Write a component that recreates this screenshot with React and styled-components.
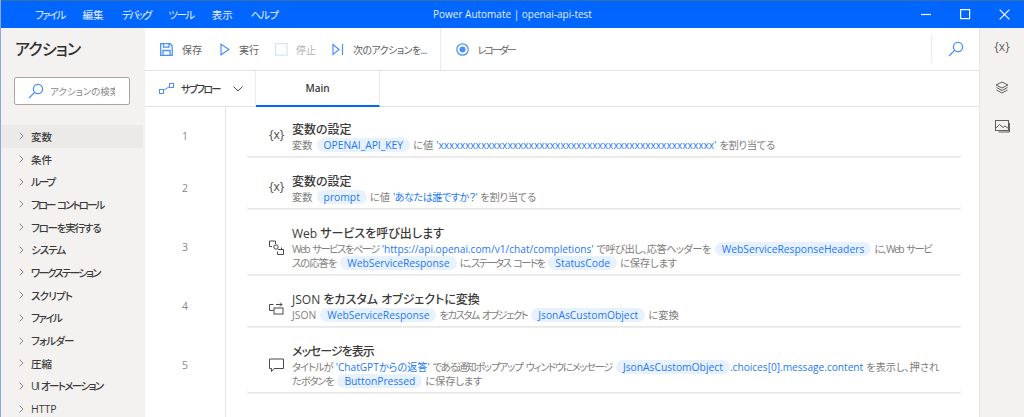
import React from "react";
import styled, { createGlobalStyle } from "styled-components";

const Global = createGlobalStyle`
  html, body { margin: 0; padding: 0; background: #fff; overflow: hidden; }
  body { font-family: "Open Sans", "Noto Sans CJK JP", sans-serif; font-feature-settings: "palt"; }
  #root { width: 1024px; height: 417px; }
`;
const Win = styled.div`
  width: 1024px; height: 417px; display: flex; flex-direction: column; overflow: hidden;
  border-left: 1px solid #8fa6d8; box-sizing: border-box; background: #fff;
`;
const TitleBar = styled.div`
  height: 28px; flex: none; background: #0066ff; border-top: 1px solid #3a6ea8; box-sizing: border-box;
  display: flex; align-items: center; color: #fff; position: relative; font-size: 10px;
`;
const Menu = styled.div`display: flex; padding-left: 34px; gap: 18px; font-size: 10.5px; color: #e8f1ff;`;
const TitleText = styled.div`position: absolute; left: 432px; top: 6px; font-size: 10px; line-height: 15px; color: #e4eeff;`;
const WinButtons = styled.div`position: absolute; right: 0; top: 0; display: flex;`;
const WinBtn = styled.div`width: 39px; height: 27px; display: flex; align-items: center; justify-content: center;`;
const Body = styled.div`flex: 1; display: flex; min-height: 0;`;
const Sidebar = styled.aside`width: 144px; flex: none; background: #f3f2f1; overflow: hidden;`;
const SideTitle = styled.div`font-size: 16px; font-weight: 500; color: #323130; padding: 10px 0 0 14px; line-height: 22px; letter-spacing: -0.8px;`;
const SearchBox = styled.div`
  margin: 17px 0 0 13px; width: 116px; height: 28px; box-sizing: border-box; background: #fff;
  border: 1px solid #a9a7a5; border-radius: 2px; display: flex; align-items: center; padding-left: 13px; gap: 6px;
  font-size: 9.5px; color: #8a8886; white-space: nowrap;
`;
const SearchHint = styled.span`width: 65px; overflow: hidden; flex: none;`;
const SideList = styled.div`margin-top: 20px;`;
const SideItem = styled.div`
  height: 22.7px; display: flex; align-items: center; font-size: 10.5px; font-weight: 500; color: #3b3a39;
  padding-left: 18px; gap: 7px; width: 142px; box-sizing: border-box; white-space: nowrap;
  background: ${p => (p.$active ? "#ebeae9" : "transparent")};
`;
const Squeezed = styled.span`letter-spacing: ${p => p.$ls || 0}px; word-spacing: 1.5px;`;
const Main = styled.main`flex: 1; display: flex; flex-direction: column; min-width: 0;`;
const Toolbar = styled.div`
  height: 43px; flex: none; box-sizing: border-box; border-bottom: 1px solid #e3e2e1; display: flex; align-items: center;
  padding-left: 15px; font-size: 10px; color: #605e5c;
`;
const ToolBtn = styled.div`
  display: flex; align-items: center; gap: ${p => p.$inner || 9}px; margin-right: ${p => p.$gap || 18}px; white-space: nowrap;
  color: ${p => (p.$off ? "#b5b3b1" : "#605e5c")};
`;
const VSep = styled.div`width: 1px; height: 42px; background: #ebeae9; flex: none;`;
const Recorder = styled.div`display: flex; align-items: center; gap: 9px; padding-left: 15px; flex: 1; white-space: nowrap;`;
const SearchSlot = styled.div`
  width: 47px; height: 28px; border-left: 1px solid #ebeae9; display: flex; align-items: center; justify-content: center;
`;
const TabBar = styled.div`
  height: 36px; flex: none; box-sizing: border-box; border-bottom: 1px solid #e3e2e1; display: flex;
`;
const Sub = styled.div`
  width: 111px; display: flex; align-items: center; box-sizing: border-box; padding-left: 14px; gap: 7px;
  border-right: 1px solid #ebeae9; font-size: 10px; font-weight: 500; color: #3b3a39; white-space: nowrap;
`;
const Tab = styled.div`
  width: 124px; box-sizing: border-box; border-right: 1px solid #ebeae9; border-bottom: 2px solid #0066ff; margin-bottom: -1px;
  display: flex; align-items: center; justify-content: center; font-size: 10px; font-weight: 600; color: #3b3a39;
`;
const Flow = styled.div`flex: 1; display: flex; min-height: 0;`;
const Gutter = styled.div`
  width: 81px; flex: none; box-sizing: border-box; border-right: 1px solid #e6e5e4; padding-top: 10px;
`;
const Num = styled.div`
  height: ${p => p.$h}px; margin-bottom: 14px; display: flex; align-items: center; justify-content: center;
  font-size: 10.5px; color: #8a8886;
`;
const Cards = styled.div`flex: 1; padding: 11px 0 0 21px; display: flex; flex-direction: column; gap: 14px;`;
const Card = styled.div`
  width: 714px; height: ${p => p.$h}px; box-sizing: border-box; background: #fff; display: flex; padding-left: 22px;
  box-shadow: 0 1px 1px rgba(0,0,0,.03), 0 2px 0 #efeeed; border-radius: 2px;
`;
const CardIcon = styled.div`width: 23px; flex: none; padding-top: ${p => p.$top || 10}px; color: #4a4948; font-size: 12px; line-height: 14px;`;
const CardBody = styled.div`padding-top: 3.5px; min-width: 0;`;
const CardTitle = styled.div`font-size: 12px; font-weight: 500; line-height: 16px; color: #3b3a39; white-space: nowrap; letter-spacing: ${p => p.$ls || 0}px;`;
const Desc = styled.div`font-size: 10.3px; line-height: 14.5px; color: #807e7c; white-space: nowrap;`;
const Txt = styled.span`letter-spacing: ${p => p.$ls ?? -0.2}px; word-spacing: 2px;`;
const Pill = styled.span`
  display: inline-block; height: 14px; line-height: 14px; padding: 0 7px; border-radius: 7px; background: #e8f2fe; color: #2478f8; margin: 0 3px 0 4px;
`;
const Val = styled.span`color: #2478f8; font-size: 10.15px; letter-spacing: ${p => p.$ls || 0}px; margin: 0 3px 0 ${p => p.$left ?? 3}px;`;
const Rail = styled.aside`
  width: 44px; flex: none; background: #f3f2f1; border-left: 1px solid #e6e5e4; display: flex; flex-direction: column; align-items: center;
  padding-top: 11px; color: #605e5c;
`;
const RailSlot = styled.div`height: 40px; font-size: 12px; line-height: 16px; display: flex; justify-content: center; padding-top: ${p => p.$top || 0}px; box-sizing: border-box;`;

const blue = "#4a90f5";
const Svg = ({ w = 14, h = 14, c = blue, sw = 1.2, children, vb }) => (
  <svg width={w} height={h} viewBox={vb || `0 0 ${w} ${h}`} fill="none" stroke={c} strokeWidth={sw} style={{ flex: "none" }}>{children}</svg>
);
const Magnify = ({ s = 16 }) => (
  <Svg w={s} h={s} vb="0 0 16 16" sw={1.3}><circle cx="10" cy="6" r="4.6" /><path d="M6.600 9.400 1 15" /></Svg>
);
const Chevron = () => (
  <svg width="5" height="8" viewBox="0 0 5 8" fill="none" stroke="#8a8886" style={{ flex: "none" }}><path d="M.7.7 4 4 .7 7.3" /></svg>
);

const menus = [["ファイル", -1.7], ["編集", 0], ["デバッグ", -2.2], ["ツール", -1.5], ["表示", 0], ["ヘルプ", -1]];
const items = [["変数", 0], ["条件", 0], ["ループ", -2], ["フロー コントロール", -1.9], ["フローを実行する", -1.2], ["システム", -1], ["ワークステーション", -1.8], ["スクリプト", -0.8], ["ファイル", -1.5], ["フォルダー", -0.8], ["圧縮", 0], ["UI オートメーション", -1.6], ["HTTP", 0]];

const WebIcon = () => (
  <Svg w={15} h={15} c="#4a4948" sw={1}>
    <path d="M3 6.500H.5v-5.500h6v3" /><circle cx="7" cy="7" r="2.200" /><path d="M9 9.500h5.500v5h-6v-3" /><path d="M12.500 7.500v2" />
  </Svg>
);
const JsonIcon = () => (
  <Svg w={15} h={14} c="#4a4948" sw={1}>
    <path d="M4.500 3.500H.5v6h4" /><rect x="5" y="7" width="9" height="6" /><path d="M7 3.500h6M11 1.500l2 2-2 2" />
  </Svg>
);
const MsgIcon = () => (
  <Svg w={15} h={15} c="#4a4948" sw={1}>
    <path d="M.5 1h14v9.500H5l-2.500 3v-3h-2z" />
  </Svg>
);

const heights = [38, 38, 52, 38, 52];

export default function App() {
  return (
    <Win>
      <Global />
      <TitleBar>
        <Menu>
          {menus.map(([t, ls]) => <Squeezed key={t} $ls={ls}>{t}</Squeezed>)}
        </Menu>
        <TitleText>Power Automate | openai-api-test</TitleText>
        <WinButtons>
          <WinBtn><Svg w={11} h={11} c="#fff"><path d="M0 5.500h10" /></Svg></WinBtn>
          <WinBtn><Svg w={11} h={11} c="#fff"><rect x=".6" y=".6" width="9" height="9" /></Svg></WinBtn>
          <WinBtn><Svg w={11} h={11} c="#fff"><path d="M.6.6l9.800 9.800M10.400.6.6 10.400" /></Svg></WinBtn>
        </WinButtons>
      </TitleBar>
      <Body>
        <Sidebar>
          <SideTitle>アクション</SideTitle>
          <SearchBox><Magnify s={16} /><SearchHint>アクションの検索</SearchHint></SearchBox>
          <SideList>
            {items.map(([t, ls], i) => (
              <SideItem key={t} $active={i === 0}><Chevron /><Squeezed $ls={ls}>{t}</Squeezed></SideItem>
            ))}
          </SideList>
        </Sidebar>
        <Main>
          <Toolbar>
            <ToolBtn>
              <Svg w={13} h={13} sw={1.3}><path d="M.7.7h9.500l2 2v9.600H.7z" /><path d="M3.500.7v3.500h5.500V.7M3 12V7.500h7V12" /></Svg>
              <span>保存</span>
            </ToolBtn>
            <ToolBtn $gap={16}>
              <Svg w={10} h={13}><path d="M1 1.200 9 6.500l-8 5.300z" /></Svg>
              <span>実行</span>
            </ToolBtn>
            <ToolBtn $off $inner={8} $gap={16}>
              <Svg w={13} h={13} c="#d3e3fa"><rect x=".6" y=".6" width="11.500" height="11.500" /></Svg>
              <span>停止</span>
            </ToolBtn>
            <ToolBtn $gap={13}>
              <Svg w={12} h={13}><path d="M1 1.500 7 6.500l-6 5zM10.500 1v11" /></Svg>
              <Squeezed $ls={-0.6}>次のアクションを...</Squeezed>
            </ToolBtn>
            <VSep />
            <Recorder>
              <Svg w={13} h={13}><circle cx="6.500" cy="6.500" r="5.700" /><circle cx="6.500" cy="6.500" r="3" fill={blue} stroke="none" /></Svg>
              <Squeezed $ls={-2}>レコーダー</Squeezed>
            </Recorder>
            <SearchSlot><Magnify s={16} /></SearchSlot>
          </Toolbar>
          <TabBar>
            <Sub>
              <Svg w={15} h={11} sw={1}><rect x=".5" y="6.500" width="4" height="4" /><rect x="10.500" y=".5" width="4" height="4" /><path d="M4.500 7.500 10.500 3.500" /></Svg>
              <Squeezed $ls={-1.4}>サブフロー</Squeezed>
              <svg width="10" height="6" viewBox="0 0 10 6" fill="none" stroke="#4a4948" style={{ marginLeft: 6 }}><path d="M.5.5 5 5 9.500.5" /></svg>
            </Sub>
            <Tab>Main</Tab>
          </TabBar>
          <Flow>
            <Gutter>
              {heights.map((h, i) => <Num key={i} $h={h}>{i + 1}</Num>)}
            </Gutter>
            <Cards>
              <Card $h={38}>
                <CardIcon>{"{x}"}</CardIcon>
                <CardBody>
                  <CardTitle>変数の設定</CardTitle>
                  <Desc><Txt $ls={0}>変数</Txt><Pill>OPENAI_API_KEY</Pill><Txt $ls={0}>に値</Txt><Val>'xxxxxxxxxxxxxxxxxxxxxxxxxxxxxxxxxxxxxxxxxxxxxxxxxxxx'</Val><Txt $ls={-0.3}>を割り当てる</Txt></Desc>
                </CardBody>
              </Card>
              <Card $h={38}>
                <CardIcon>{"{x}"}</CardIcon>
                <CardBody>
                  <CardTitle>変数の設定</CardTitle>
                  <Desc><Txt $ls={0}>変数</Txt><Pill>prompt</Pill><Txt $ls={0}>に値</Txt><Val $ls={-0.5}>'あなたは誰ですか？'</Val><Txt $ls={-0.3}>を割り当てる</Txt></Desc>
                </CardBody>
              </Card>
              <Card $h={52}>
                <CardIcon $top={18}><WebIcon /></CardIcon>
                <CardBody>
                  <CardTitle>Web サービスを呼び出します</CardTitle>
                  <Desc>
                    <Txt $ls={-1.5}>Web サービスをページ</Txt><Val>'https://api.openai.com/v1/chat/completions'</Val><Txt $ls={-0.6}>で呼び出し、応答ヘッダーを</Txt><Pill>WebServiceResponseHeaders</Pill><Txt $ls={-1.5}>に、Web サービ</Txt><br />
                    <Txt $ls={-1}>スの応答を</Txt><Pill>WebServiceResponse</Pill><Txt $ls={-1.6}>に、ステータス コードを</Txt><Pill>StatusCode</Pill><Txt>に保存します</Txt>
                  </Desc>
                </CardBody>
              </Card>
              <Card $h={38}>
                <CardIcon $top={13}><JsonIcon /></CardIcon>
                <CardBody>
                  <CardTitle>JSON をカスタム オブジェクトに変換</CardTitle>
                  <Desc><Txt $ls={0}>JSON</Txt><Pill>WebServiceResponse</Pill><Txt $ls={-1.5}>をカスタム オブジェクト</Txt><Pill>JsonAsCustomObject</Pill><Txt $ls={0}>に変換</Txt></Desc>
                </CardBody>
              </Card>
              <Card $h={52}>
                <CardIcon $top={18}><MsgIcon /></CardIcon>
                <CardBody>
                  <CardTitle $ls={-1}>メッセージを表示</CardTitle>
                  <Desc>
                    <Txt $ls={-1}>タイトルが</Txt><Val>'ChatGPTからの返答'</Val><Txt $ls={-1.3}>である通知ポップアップ ウィンドウにメッセージ</Txt><Pill>JsonAsCustomObject</Pill><Val $left={-3}>.choices[0].message.content</Val><Txt $ls={-0.1}>を表示し、押され</Txt><br />
                    <Txt $ls={-1.2}>たボタンを</Txt><Pill>ButtonPressed</Pill><Txt>に保存します</Txt>
                  </Desc>
                </CardBody>
              </Card>
            </Cards>
          </Flow>
        </Main>
        <Rail>
          <RailSlot>{"{x}"}</RailSlot>
          <RailSlot $top={2}>
            <Svg w={14} h={14} c="#605e5c" sw={1}><path d="M7 1 13 4 7 7 1 4zM1.500 6.500 7 9.500l5.500-3M1.500 9 7 12l5.500-3" /></Svg>
          </RailSlot>
          <RailSlot>
            <Svg w={15} h={14} c="#605e5c" sw={1}><rect x=".5" y="1.500" width="13" height="10" /><path d="M1 9l3.500-3.500L8 8.500l2-1.500 3.500 2.500M14.500 4v9h-11" /></Svg>
          </RailSlot>
        </Rail>
      </Body>
    </Win>
  );
}
